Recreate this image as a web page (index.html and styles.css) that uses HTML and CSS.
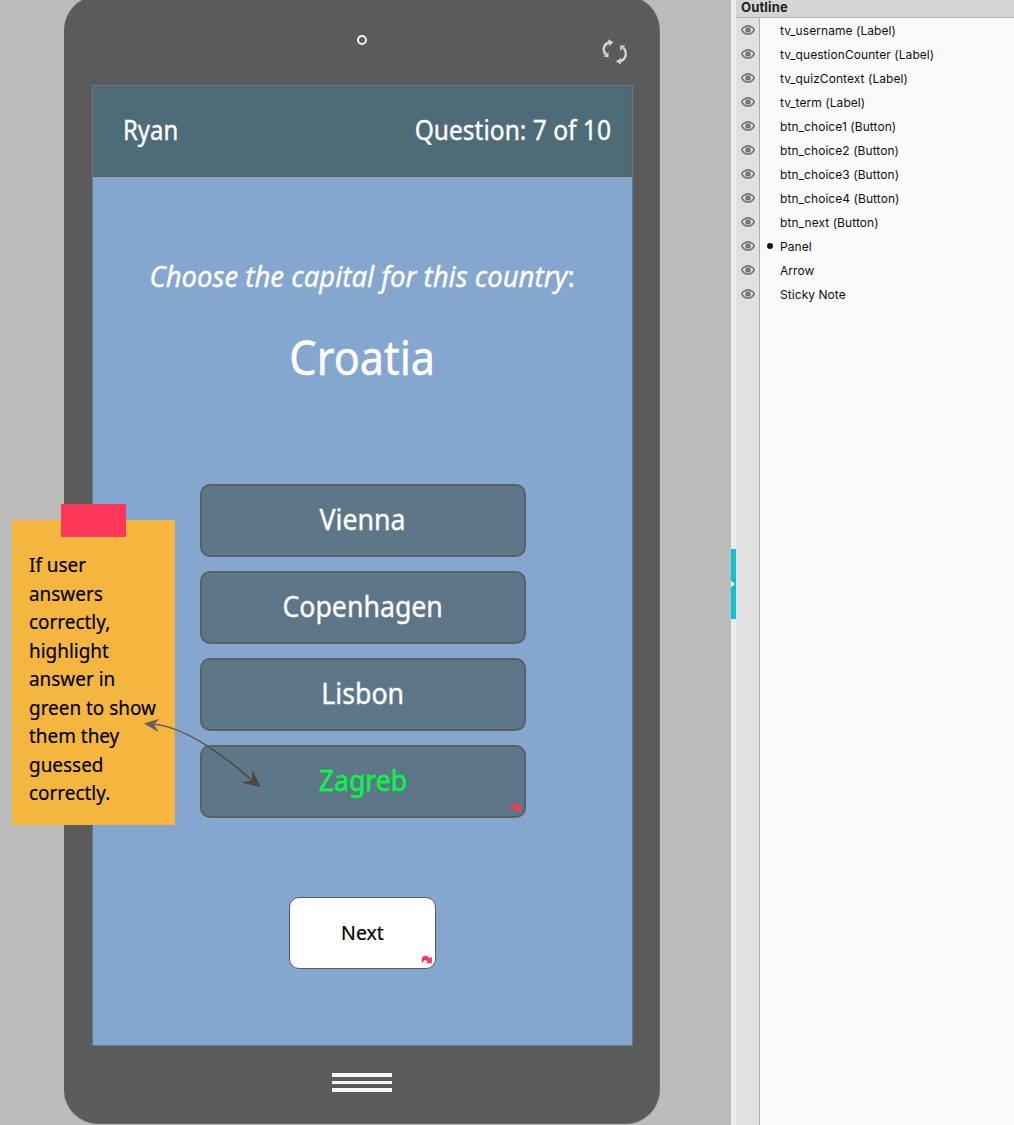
FILE: index.html
```html
<!DOCTYPE html>
<html lang="en">
<head>
<meta charset="utf-8">
<title>Quiz mockup</title>
<link rel="stylesheet" href="styles.css">
</head>
<body>
<svg width="0" height="0" class="defs" aria-hidden="true">
  <symbol id="eye" viewBox="0 0 14 10">
    <path d="M.7 5C2.4 2 4.6.9 7 .9S11.600 2 13.300 5C11.600 8 9.400 9.100 7 9.100S2.400 8 .7 5Z" fill="none" stroke="#7b7b7b" stroke-width="1.600"/>
    <circle cx="7" cy="4.900" r="2.700" fill="#747474"/>
    <circle cx="6.200" cy="4" r=".7" fill="#aaa"/>
  </symbol>
  <symbol id="link" viewBox="0 0 12 10">
    <path d="M.8 8.600V4.200C1 1.800 2.700.8 4.500.8c2 0 2.900 1 4 2.400L10.900 1.800V8.300H4.900L6.500 6.600C5.500 5 3.600 4.400 2.600 6.200Z" fill="#ff3658"/>
  </symbol>
</svg>
<main class="canvas">
  <section class="phone">
    <div class="bezel-top">
      <span class="camera"></span>
      <svg class="rotate" width="26" height="26" viewBox="0 0 26 26">
        <g fill="none" stroke="#d2d2d2" stroke-width="2.400">
          <path d="M7 3.500C1.800 5 0 11 3.800 15.500"/>
          <path d="M18.500 22C24 20.500 25.500 13.500 21.500 9"/>
        </g>
        <path d="M6 .2 11.500 3.200 7 7ZM1.500 17.500 6.500 13V18.500ZM18.200 6.500H23.500L18.200 12ZM13.800 22.300 19 19V25.500Z" fill="#d2d2d2"/>
      </svg>
    </div>
    <div class="screen">
      <header class="quiz-bar">
        <span class="user">Ryan</span>
        <span class="counter">Question: 7 of 10</span>
      </header>
      <div class="quiz">
        <p class="prompt"><i>Choose the capital for this country</i>:</p>
        <h1 class="term">Croatia</h1>
        <div class="choices">
          <div class="choice"><span>Vienna</span></div>
          <div class="choice"><span>Copenhagen</span></div>
          <div class="choice"><span>Lisbon</span></div>
          <div class="choice correct"><span>Zagreb</span><svg class="link"><use href="#link"/></svg></div>
        </div>
        <div class="next"><span>Next</span><svg class="link"><use href="#link"/></svg></div>
      </div>
    </div>
    <div class="home"><i></i><i></i><i></i></div>
  </section>
  <aside class="note">
    <p>If user<br>answers<br>correctly,<br>highlight<br>answer in<br>green to show<br>them they<br>guessed<br>correctly.</p>
    <span class="tape"></span>
  </aside>
  <svg class="arrow" width="124" height="76" viewBox="140 715 124 76">
    <defs><linearGradient id="ink" gradientUnits="userSpaceOnUse" x1="144" y1="0" x2="261" y2="0">
      <stop offset=".45" stop-color="#606060"/><stop offset=".6" stop-color="#484a42"/>
    </linearGradient></defs>
    <path d="M150 724Q190 725 255 783" fill="none" stroke="url(#ink)" stroke-width="1.500"/>
    <path d="M144 723.500 159.500 718.800 154 724.500 158.500 732Z" fill="#606060"/>
    <path d="M260.800 787.300 252.500 769.800 251.800 780.500 241.500 782.500Z" fill="#484a42"/>
  </svg>
</main>
<div class="splitter"><span class="grip"></span></div>
<aside class="outline">
  <h2>Outline</h2>
  <ul>
    <li><svg><use href="#eye"/></svg><span>tv_username (Label)</span></li>
    <li><svg><use href="#eye"/></svg><span>tv_questionCounter (Label)</span></li>
    <li><svg><use href="#eye"/></svg><span>tv_quizContext (Label)</span></li>
    <li><svg><use href="#eye"/></svg><span>tv_term (Label)</span></li>
    <li><svg><use href="#eye"/></svg><span>btn_choice1 (Button)</span></li>
    <li><svg><use href="#eye"/></svg><span>btn_choice2 (Button)</span></li>
    <li><svg><use href="#eye"/></svg><span>btn_choice3 (Button)</span></li>
    <li><svg><use href="#eye"/></svg><span>btn_choice4 (Button)</span></li>
    <li><svg><use href="#eye"/></svg><span>btn_next (Button)</span></li>
    <li class="group"><svg><use href="#eye"/></svg><span>Panel</span></li>
    <li><svg><use href="#eye"/></svg><span>Arrow</span></li>
    <li><svg><use href="#eye"/></svg><span>Sticky Note</span></li>
  </ul>
</aside>
</body>
</html>
```

FILE: styles.css
```css
* { box-sizing: border-box; margin: 0; padding: 0; }
body { display: flex; width: 1014px; height: 1125px; overflow: hidden; font-family: "Noto Sans", "Open Sans", sans-serif; color: #000; }
.defs { position: absolute; }

.canvas { position: relative; flex: none; display: flex; width: 731px; height: 1125px; overflow: hidden; background: #bcbcbc; }
.phone { flex: none; width: 596px; height: 1128px; margin: -4px 0 0 64px; padding: 0 27px 0 28px; border: 1px solid #6c6c6c; border-width: 0 1px 1px 0; border-radius: 34px; background: #5b5b5b; }
.bezel-top { position: relative; display: flex; justify-content: center; height: 89px; padding-top: 39px; }
.camera { width: 10px; height: 10px; margin-right: 1px; border: 2px solid #f2f2f2; border-radius: 50%; }
.rotate { position: absolute; right: 4px; top: 43px; }

.screen { width: 541px; height: 961px; border: 1px solid #687b8d; background: #84a6cf; }
.quiz-bar { display: flex; align-items: center; justify-content: space-between; height: 91px; padding: 0 20px 3px 29px; border: 1px solid #5b5f5f; background: #4e6c77; color: #fff; font-size: 26.500px; line-height: 36px; }
.quiz-bar, .prompt, .choice { -webkit-text-stroke: .35px currentColor; }
.quiz-bar span, .choice span, .next span { display: inline-block; white-space: nowrap; }
.user { transform: scaleX(.9); transform-origin: left; }
.counter { transform: scaleX(.926); transform-origin: right; }
.quiz { display: flex; flex-direction: column; align-items: center; padding-top: 78px; }
.prompt { height: 42px; line-height: 42px; font-size: 29.500px; color: #fff; white-space: nowrap; transform: scaleX(.932); }
.term { height: 66px; margin-top: 27px; line-height: 66px; font-size: 47px; font-weight: 400; color: #fff; transform: scaleX(.92); -webkit-text-stroke: .5px currentColor; }
.choices { display: grid; gap: 14px; margin-top: 94px; }
.choice { position: relative; display: flex; align-items: center; justify-content: center; width: 326px; height: 73px; padding-bottom: 3px; border: 2px solid #5b6063; border-radius: 10px; background: #5d7688; color: #fff; font-size: 29.500px; line-height: 40px; }
.choice span { transform: scaleX(.905); }
.correct { color: #00ff40; }
.next { position: relative; display: flex; align-items: center; justify-content: center; width: 147px; height: 72px; margin-top: 79px; padding-bottom: 2px; border: 1.500px solid #5b5b5b; border-radius: 10px; background: #fff; font-size: 20.500px; -webkit-text-stroke: .2px currentColor; }
.next span { transform: scaleX(.95); }
.link { position: absolute; right: 2px; bottom: 3px; width: 12px; height: 10px; }
.home { display: grid; gap: 4px; width: 60px; margin: 27px auto 0 240px; }
.home i { height: 3.500px; background: #f8f8f8; }

.note { position: absolute; left: 12px; top: 520px; width: 163px; height: 305px; padding: 30px 0 0 17px; background: #f4b63f; font-size: 20.500px; line-height: 28.500px; white-space: nowrap; -webkit-text-stroke: .2px currentColor; }
.note p { width: max-content; transform: scaleX(.923); transform-origin: left; }
.tape { position: absolute; left: 49px; top: -16px; width: 64.500px; height: 33px; background: #ff3859; }
.arrow { position: absolute; left: 140px; top: 715px; }

.splitter { flex: none; display: flex; align-items: center; width: 5px; padding-top: 43px; background: #ececec; }
.grip { display: flex; align-items: center; width: 5px; height: 70px; background: #0ec3d0; }
.grip::before { content: ""; border: 3px solid transparent; border-left: 4px solid #fff; border-right: 0; }

.outline { flex: none; width: 278px; background: linear-gradient(90deg, #e1e1e1 23px, #adadad 23px, #adadad 24px, #fafafa 24px); font-family: Inter, "Liberation Sans", sans-serif; }
.outline h2 { height: 18px; padding-left: 5px; border-bottom: 1px solid #b4b4b4; background: #d5d5d5; font-size: 13px; letter-spacing: .15px; line-height: 15px; font-weight: 700; color: #1d1d1d; }
.outline ul { list-style: none; }
.outline li { position: relative; display: flex; align-items: center; gap: 25px; height: 24px; padding-left: 5px; font-size: 12px; letter-spacing: .06px; color: #111; }
.outline li + li::before { content: ""; position: absolute; left: 23px; top: 0; width: 1px; height: 1px; background: #e6e6e6; }
.outline li svg { width: 14px; height: 10px; }
.outline li span { padding-top: 1px; line-height: 14px; }
.group::after { content: ""; position: absolute; left: 31px; top: 9px; width: 6px; height: 6px; border-radius: 50%; background: #111; }
```
